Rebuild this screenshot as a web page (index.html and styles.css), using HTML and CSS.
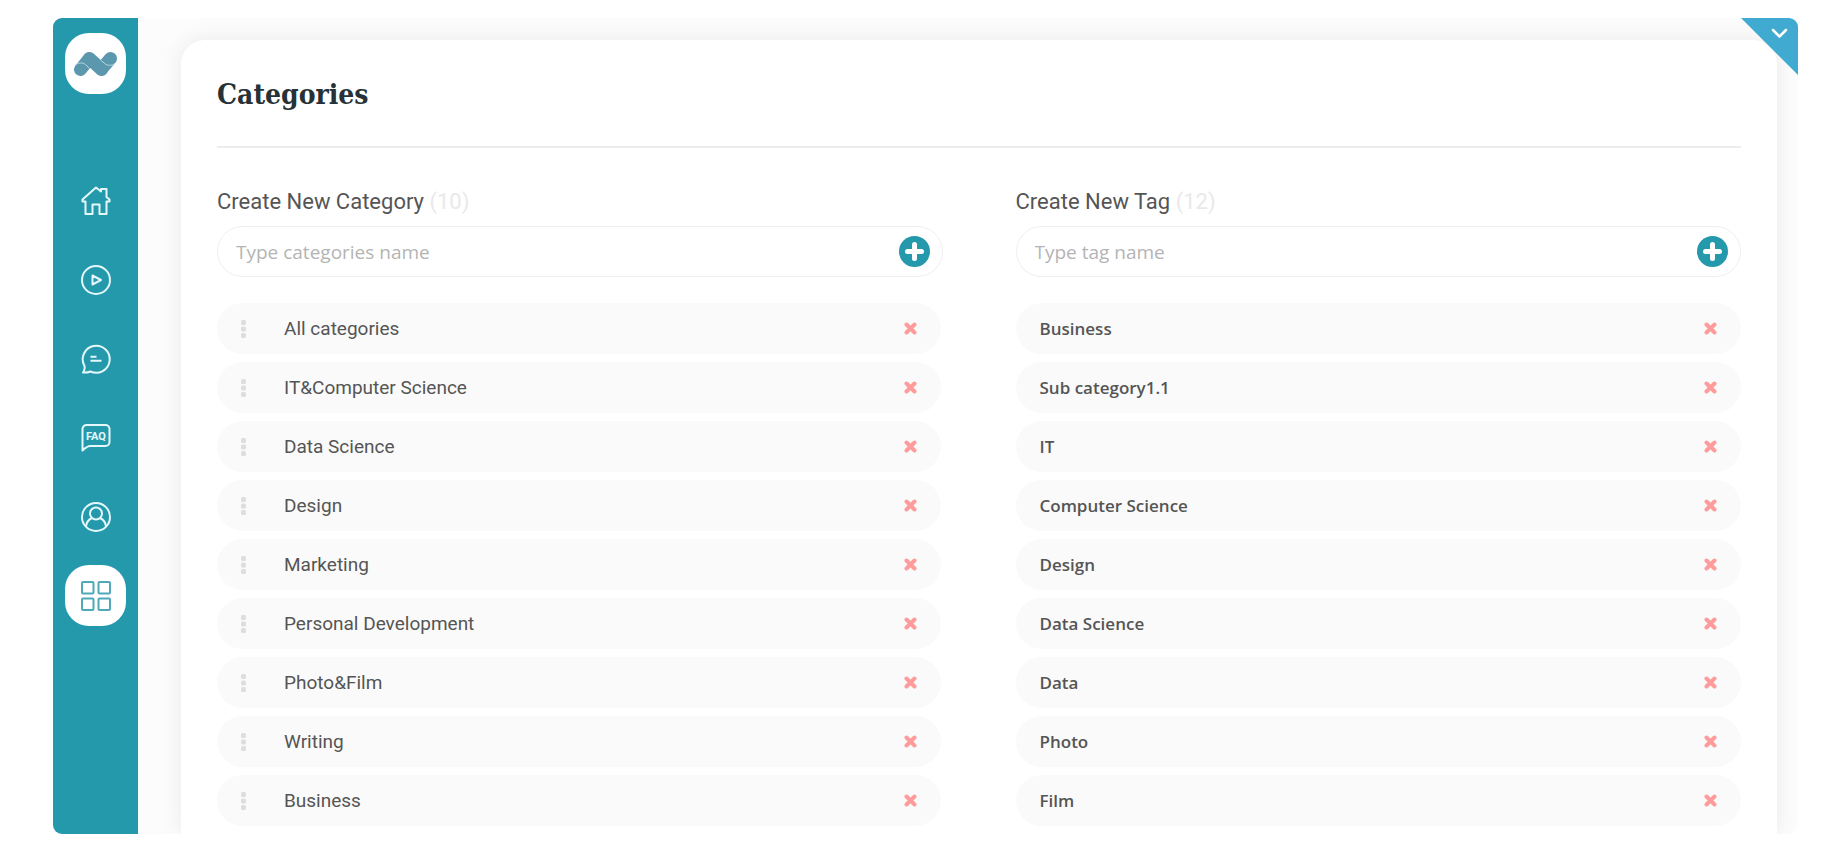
FILE: index.html
```
<!DOCTYPE html>
<html lang="en">
<head>
<meta charset="UTF-8">
<meta name="viewport" content="width=device-width, initial-scale=1.0">
<title>Categories</title>
<link rel="stylesheet" href="styles.css">
</head>
<body>

<!-- shared icons -->
<svg class="sprite">
    <symbol id="plus" viewBox="0 0 31 31">
        <circle cx="15.5" cy="15.5" r="15.5" fill="#2499ac"/>
        <path d="M15.5 8.5v14M8.5 15.5h14" stroke="#fff" stroke-width="5" stroke-linecap="round"/>
    </symbol>
    <symbol id="cross" viewBox="0 0 13 13">
        <path d="M2.5 2.5l8 8M10.5 2.5l-8 8" stroke="#ff9b9b" stroke-width="4" stroke-linecap="round"/>
    </symbol>
    <symbol id="grip" viewBox="0 0 5 18">
        <g fill="#dedede">
            <rect x="0" y="0" width="5" height="5" rx="1.5"/>
            <rect x="0" y="6.5" width="5" height="5" rx="1.5"/>
            <rect x="0" y="13" width="5" height="5" rx="1.5"/>
        </g>
    </symbol>
</svg>

<div class="app">
    <nav class="sidebar">
        <a href="#" class="logo">
            <svg width="45" height="26" viewBox="0 0 45 26">
                <g fill="none" stroke="#5b98ad" stroke-width="13" stroke-linecap="round">
                    <path d="M7.5 18.5L16 8"/>
                    <path d="M28.500 18L37.500 7.500"/>
                    <path d="M16.500 7.500L28.500 18.500"/>
                </g>
                <path d="M2 14.500c3-3.500 8-3 10.500-1l4 4M27.500 9l5.500 4.500c3 1.500 6 1 9-1" fill="none" stroke="#b9d6df" stroke-width="1"/>
            </svg>
        </a>
        <ul class="menu">
            <li><a href="#">
                <svg width="30" height="30" viewBox="0 0 30 30">
                    <path d="M15 1.500L1.500 13.500v2H4.500v12.500h7v-9.500h7v9.500h7V15.500h3v-2l-3-2.500V3h-5.500v2.500z"/>
                </svg>
            </a></li>
            <li><a href="#">
                <svg width="30" height="30" viewBox="0 0 30 30">
                    <circle cx="15" cy="15" r="14"/>
                    <path d="M11.500 10.500v9l8.500-4.500z"/>
                </svg>
            </a></li>
            <li><a href="#">
                <svg width="30" height="30" viewBox="0 0 30 30">
                    <path d="M2 28.500c1.500-2 2-4 1.500-6.500A13.500 13.500 0 1 1 9.500 27.500C7 28.500 4.500 28.800 2 28.500z"/>
                    <path d="M9.500 12.700h6M9.500 16.700h11"/>
                </svg>
            </a></li>
            <li><a href="#">
                <svg width="30" height="30" viewBox="0 0 30 30">
                    <path d="M1.500 27.500V6a4 4 0 0 1 4-4h19a4 4 0 0 1 4 4v13a4 4 0 0 1-4 4H9c-3 .3-5 2-7.500 4.500z"/>
                    <text class="faq" x="15" y="17" text-anchor="middle">FAQ</text>
                </svg>
            </a></li>
            <li><a href="#">
                <svg width="30" height="30" viewBox="0 0 30 30">
                    <circle cx="15" cy="15" r="14"/>
                    <circle cx="15" cy="11.500" r="6"/>
                    <path d="M5 24.500c.5-4 2.500-7 6-8.500M25 24.500c-.5-4-2.500-7-6-8.500"/>
                </svg>
            </a></li>
            <li><a href="#" class="active">
                <svg width="30" height="30" viewBox="0 0 30 30">
                    <rect x="1" y="1" width="11.500" height="11.500" rx="1"/>
                    <rect x="17.500" y="1" width="11.500" height="11.500" rx="1"/>
                    <rect x="1" y="17.500" width="11.500" height="11.500" rx="1"/>
                    <rect x="17.500" y="17.500" width="11.500" height="11.500" rx="1"/>
                </svg>
            </a></li>
        </ul>
    </nav>

    <main class="content">
        <div class="panel">
            <h1>Categories</h1>
            <div class="columns">
                <section class="categories">
                    <form>
                        <label for="category">Create New Category <span>(10)</span></label>
                        <div class="field">
                            <input type="text" id="category" placeholder="Type categories name">
                            <button type="button"><svg width="31" height="31"><use href="#plus"/></svg></button>
                        </div>
                    </form>
                    <ul class="list">
                        <li><svg width="5" height="18"><use href="#grip"/></svg><span>All categories</span><button><svg width="13" height="13"><use href="#cross"/></svg></button></li>
                        <li><svg width="5" height="18"><use href="#grip"/></svg><span>IT&amp;Computer Science</span><button><svg width="13" height="13"><use href="#cross"/></svg></button></li>
                        <li><svg width="5" height="18"><use href="#grip"/></svg><span>Data Science</span><button><svg width="13" height="13"><use href="#cross"/></svg></button></li>
                        <li><svg width="5" height="18"><use href="#grip"/></svg><span>Design</span><button><svg width="13" height="13"><use href="#cross"/></svg></button></li>
                        <li><svg width="5" height="18"><use href="#grip"/></svg><span>Marketing</span><button><svg width="13" height="13"><use href="#cross"/></svg></button></li>
                        <li><svg width="5" height="18"><use href="#grip"/></svg><span>Personal Development</span><button><svg width="13" height="13"><use href="#cross"/></svg></button></li>
                        <li><svg width="5" height="18"><use href="#grip"/></svg><span>Photo&amp;Film</span><button><svg width="13" height="13"><use href="#cross"/></svg></button></li>
                        <li><svg width="5" height="18"><use href="#grip"/></svg><span>Writing</span><button><svg width="13" height="13"><use href="#cross"/></svg></button></li>
                        <li><svg width="5" height="18"><use href="#grip"/></svg><span>Business</span><button><svg width="13" height="13"><use href="#cross"/></svg></button></li>
                    </ul>
                </section>

                <section class="tags">
                    <form>
                        <label for="tag">Create New Tag <span>(12)</span></label>
                        <div class="field">
                            <input type="text" id="tag" placeholder="Type tag name">
                            <button type="button"><svg width="31" height="31"><use href="#plus"/></svg></button>
                        </div>
                    </form>
                    <ul class="list">
                        <li><span>Business</span><button><svg width="13" height="13"><use href="#cross"/></svg></button></li>
                        <li><span>Sub category1.1</span><button><svg width="13" height="13"><use href="#cross"/></svg></button></li>
                        <li><span>IT</span><button><svg width="13" height="13"><use href="#cross"/></svg></button></li>
                        <li><span>Computer Science</span><button><svg width="13" height="13"><use href="#cross"/></svg></button></li>
                        <li><span>Design</span><button><svg width="13" height="13"><use href="#cross"/></svg></button></li>
                        <li><span>Data Science</span><button><svg width="13" height="13"><use href="#cross"/></svg></button></li>
                        <li><span>Data</span><button><svg width="13" height="13"><use href="#cross"/></svg></button></li>
                        <li><span>Photo</span><button><svg width="13" height="13"><use href="#cross"/></svg></button></li>
                        <li><span>Film</span><button><svg width="13" height="13"><use href="#cross"/></svg></button></li>
                    </ul>
                </section>
            </div>
        </div>
    </main>

    <button class="corner">
        <svg width="57" height="57" viewBox="0 0 57 57">
            <path d="M0 0h57v57z" fill="#41aad0"/>
            <path d="M32 12l6.500 6.500L45 12" fill="none" stroke="#fff" stroke-width="2.500" stroke-linecap="round" stroke-linejoin="round"/>
        </svg>
    </button>
</div>

</body>
</html>
```
FILE: styles.css
```
* {
    box-sizing: border-box;
}

body {
    font-family: Roboto, sans-serif;
    margin: 0;
    padding: 18px 46px 18px 53px;
    background-color: #fff;
    color: #555;
}

ul {
    list-style-type: none;
    margin: 0;
    padding: 0;
}

button {
    display: flex;
    padding: 0;
    border: none;
    background: none;
    cursor: pointer;
}

.sprite {
    display: none;
}

.app {
    position: relative;
    display: flex;
    height: calc(100vh - 36px);
    background-color: #fcfcfc;
    border-radius: 9px;
    overflow: hidden;
}

/* Sidebar */
.sidebar {
    flex: none;
    display: flex;
    flex-direction: column;
    align-items: center;
    gap: 76px;
    width: 85px;
    padding-top: 15px;
    background-color: #2499ac;
}

.menu {
    display: flex;
    flex-direction: column;
    gap: 18px;
}

.logo,
.menu a {
    display: flex;
    align-items: center;
    justify-content: center;
    width: 61px;
    height: 61px;
    border-radius: 24px;
}

.logo,
.menu .active {
    background-color: #fff;
}

.menu svg {
    fill: none;
    stroke: #e4f7fa;
    stroke-width: 2;
    stroke-linejoin: round;
}

.menu .active svg {
    stroke: #4fa9b9;
}

.menu .faq {
    font: bold 11px Roboto, sans-serif;
    fill: #e4f7fa;
    stroke: none;
}

/* Content */
.content {
    flex: 1;
    display: flex;
    padding: 22px 21px 0 43px;
}

.panel {
    flex: 1;
    padding: 35px 36px 0;
    background-color: #fff;
    border-radius: 24px 24px 0 0;
    box-shadow: 0 0 22px rgba(0, 0, 0, 0.08);
}

h1 {
    margin: 0 0 40px;
    padding-bottom: 31px;
    border-bottom: 2px solid #ededeb;
    font: bold 28px/40px "DejaVu Serif Condensed", "DejaVu Serif", serif;
    color: #263238;
}

.columns {
    display: grid;
    grid-template-columns: 1fr 1fr;
    gap: 73px;
}

label {
    display: block;
    margin-bottom: 10px;
    font-size: 22px;
    line-height: 28px;
}

label span {
    color: #e9e9e9;
}

.field {
    display: flex;
    align-items: center;
    height: 51px;
    padding: 0 12px 0 18px;
    border: 1px solid #eee;
    border-radius: 26px;
}

.field input {
    flex: 1;
    min-width: 0;
    padding: 0;
    border: none;
    outline: none;
    background: none;
    font: 19px/28px "Open Sans", sans-serif;
    color: #555;
}

.field input::placeholder {
    color: #b4b4b4;
}

.list {
    display: flex;
    flex-direction: column;
    gap: 8px;
    margin-top: 26px;
}

.list li {
    display: flex;
    align-items: center;
    height: 51px;
    padding: 0 24px;
    background-color: #fafafa;
    border-radius: 26px;
}

.list span {
    flex: 1;
}

.list li button {
    padding: 6px 0 6px 6px;
}

.categories .list {
    margin-right: 2px;
    font-size: 19px;
}

.categories .list li > svg {
    margin-right: 38px;
}

.tags .list {
    font-family: "Open Sans", sans-serif;
    font-size: 17px;
    font-weight: 600;
}

/* Corner toggle */
.corner {
    position: absolute;
    top: 0;
    right: 0;
}
```
